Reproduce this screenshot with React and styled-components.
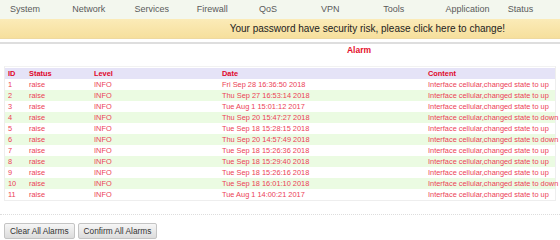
import React from "react";
import styled, { createGlobalStyle } from "styled-components";

const menu = ["System", "Network", "Services", "Firewall", "QoS", "VPN", "Tools", "Application", "Status"];

const alarms = [
  { id: 1, date: "Fri Sep 28 16:36:50 2018", state: "up" },
  { id: 2, date: "Thu Sep 27 16:53:14 2018", state: "up" },
  { id: 3, date: "Tue Aug 1 15:01:12 2017", state: "up" },
  { id: 4, date: "Thu Sep 20 15:47:27 2018", state: "down" },
  { id: 5, date: "Tue Sep 18 15:28:15 2018", state: "up" },
  { id: 6, date: "Thu Sep 20 14:57:49 2018", state: "down" },
  { id: 7, date: "Tue Sep 18 15:26:36 2018", state: "up" },
  { id: 8, date: "Tue Sep 18 15:29:40 2018", state: "up" },
  { id: 9, date: "Tue Sep 18 15:26:16 2018", state: "up" },
  { id: 10, date: "Tue Sep 18 16:01:10 2018", state: "down" },
  { id: 11, date: "Tue Aug 1 14:00:21 2017", state: "up" },
];

const App = () => {
  return (
    <>
      <GlobalStyle />
      <StNav>
        {menu.map((item) => (
          <StNavItem key={item}>{item}</StNavItem>
        ))}
      </StNav>
      <StBanner>Your password have security risk, please click here to change!</StBanner>
      <StDivider />
      <StTitle>Alarm</StTitle>
      <StTableWrap>
        <StTable>
          <colgroup>
            <col style={{ width: 21 }} />
            <col style={{ width: 65 }} />
            <col style={{ width: 128 }} />
            <col style={{ width: 206 }} />
            <col />
          </colgroup>
          <thead>
            <tr>
              <StTh>ID</StTh>
              <StTh>Status</StTh>
              <StTh>Level</StTh>
              <StTh>Date</StTh>
              <StTh>Content</StTh>
            </tr>
          </thead>
          <tbody>
            {alarms.map((a) => (
              <StRow key={a.id} even={a.id % 2 === 0}>
                <StTd>{a.id}</StTd>
                <StTd>raise</StTd>
                <StTd>INFO</StTd>
                <StTd>{a.date}</StTd>
                <StTd>Interface cellular,changed state to {a.state}</StTd>
              </StRow>
            ))}
          </tbody>
        </StTable>
      </StTableWrap>
      <StDotted />
      <StActions>
        <StButton>Clear All Alarms</StButton>
        <StButton>Confirm All Alarms</StButton>
      </StActions>
    </>
  );
};

export default App;

const GlobalStyle = createGlobalStyle`
  html, body {
    margin: 0;
    padding: 0;
    background: #fff;
    font-family: "Liberation Sans", Arial, sans-serif;
    width: 560px;
    height: 240px;
    overflow: hidden;
  }
`;

const StNav = styled.div`
  display: flex;
  height: 19px;
  background: #f3f7ee;
`;

const StNavItem = styled.div`
  flex: 1;
  padding-left: 10px;
  font-size: 9px;
  line-height: 19px;
  color: #5a5a5a;
`;

const StBanner = styled.div`
  height: 19px;
  line-height: 19px;
  background: linear-gradient(#fbebb8, #f6df9c);
  border-bottom: 1px solid #eed9a0;
  text-align: right;
  padding-right: 55px;
  font-size: 10px;
  color: #222;
`;

const StDivider = styled.div`
  margin-top: 3px;
  border-top: 2px solid #dedede;
`;

const StTitle = styled.div`
  padding-left: 158px;
  text-align: center;
  font-size: 8.5px;
  font-weight: bold;
  color: #e5102b;
  line-height: 12px;
  height: 22px;
`;

const StTableWrap = styled.div`
  margin: 0 4px;
  border: 1px solid #eee;
  border-top: 1px solid #f2f2f2;
  padding-top: 1px;
`;

const StTable = styled.table`
  width: 100%;
  border-collapse: collapse;
  table-layout: fixed;
  font-size: 7.4px;
`;

const StTh = styled.th`
  background: #e5e3f7;
  color: #e0062a;
  font-weight: bold;
  text-align: left;
  padding: 0 0 0 3px;
  height: 11px;
  line-height: 11px;
  white-space: nowrap;
`;

const StRow = styled.tr`
  background: ${({ even }) => (even ? "#ebfbe2" : "#fff")};
`;

const StTd = styled.td`
  color: #ec3e55;
  padding: 0 0 0 3px;
  height: 11px;
  line-height: 11px;
  white-space: nowrap;
  overflow: visible;
`;

const StDotted = styled.div`
  margin-top: 13px;
  border-top: 1px dotted #ddd;
`;

const StActions = styled.div`
  display: flex;
  gap: 3px;
  padding: 8px 4px 0;
`;

const StButton = styled.button`
  height: 16px;
  padding: 0 5px;
  font-family: "Liberation Sans", Arial, sans-serif;
  font-size: 8.3px;
  color: #333;
  background: linear-gradient(#f6f6f6, #dcdcdc);
  border: 1px solid #c4c4c4;
  border-radius: 2px;
  cursor: pointer;
`;
